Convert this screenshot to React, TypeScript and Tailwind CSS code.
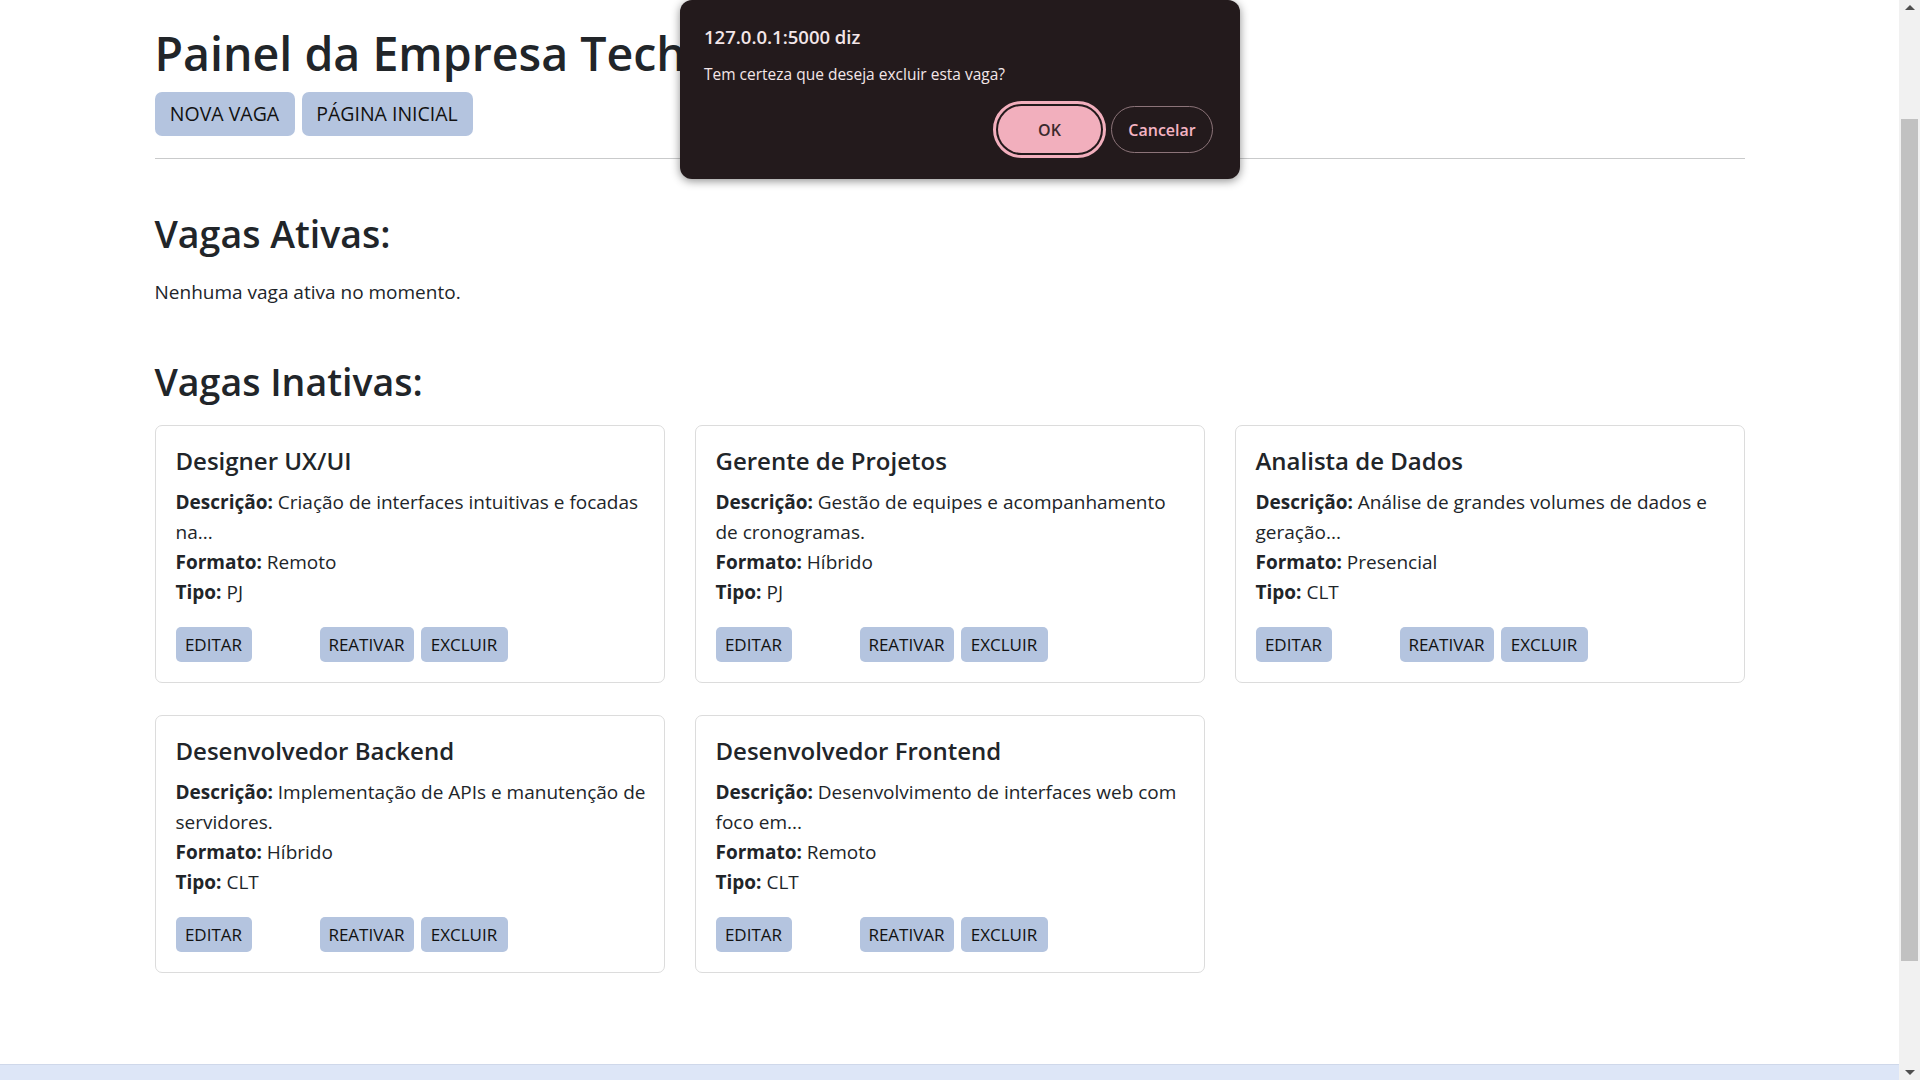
import type { ReactNode } from 'react'

type Vaga = {
  titulo: string
  descricao: [string, string]
  formato: string
  tipo: string
}

const vagas: Vaga[] = [
  {
    titulo: 'Designer UX/UI',
    descricao: ['Criação de interfaces intuitivas e focadas', 'na...'],
    formato: 'Remoto',
    tipo: 'PJ',
  },
  {
    titulo: 'Gerente de Projetos',
    descricao: ['Gestão de equipes e acompanhamento', 'de cronogramas.'],
    formato: 'Híbrido',
    tipo: 'PJ',
  },
  {
    titulo: 'Analista de Dados',
    descricao: ['Análise de grandes volumes de dados e', 'geração...'],
    formato: 'Presencial',
    tipo: 'CLT',
  },
  {
    titulo: 'Desenvolvedor Backend',
    descricao: ['Implementação de APIs e manutenção de', 'servidores.'],
    formato: 'Híbrido',
    tipo: 'CLT',
  },
  {
    titulo: 'Desenvolvedor Frontend',
    descricao: ['Desenvolvimento de interfaces web com', 'foco em...'],
    formato: 'Remoto',
    tipo: 'CLT',
  },
]

function SmallButton({ children, className }: { children: ReactNode; className: string }) {
  return (
    <button
      className={`flex h-[35px] items-center justify-center rounded-[5px] bg-[#b4c4df] text-[17px] text-[#111] ${className}`}
    >
      {children}
    </button>
  )
}

function VagaCard({ vaga }: { vaga: Vaga }) {
  return (
    <div className="h-[258px] rounded-[7px] border border-[#dcdcdc] bg-white px-5 pt-5">
      <h5 className="mb-[11px] text-[24px] font-semibold leading-[30px] whitespace-nowrap">{vaga.titulo}</h5>
      <div className="text-[19px] leading-[30px] whitespace-nowrap">
        <p>
          <strong className="font-bold">Descrição:</strong> {vaga.descricao[0]}
        </p>
        <p>{vaga.descricao[1]}</p>
        <p>
          <strong className="font-bold">Formato:</strong> {vaga.formato}
        </p>
        <p>
          <strong className="font-bold">Tipo:</strong> {vaga.tipo}
        </p>
      </div>
      <div className="mt-[20px] flex items-center">
        <SmallButton className="w-[76px]">EDITAR</SmallButton>
        <SmallButton className="ml-[68px] w-[94px]">REATIVAR</SmallButton>
        <SmallButton className="ml-[7px] w-[87px]">EXCLUIR</SmallButton>
      </div>
    </div>
  )
}

function ConfirmDialog() {
  return (
    <div className="absolute left-[680px] top-0 h-[179px] w-[560px] rounded-[12px] bg-[#231a1c] px-6 shadow-[0_2px_10px_rgba(0,0,0,0.45)]">
      <div className="pt-[25px] text-[18.5px] font-semibold leading-6 text-[#f3e6e8]">127.0.0.1:5000 diz</div>
      <div className="mt-[15px] text-[15.5px] leading-5 text-[#f3e6e8]">Tem certeza que deseja excluir esta vaga?</div>
      <div className="mt-[22px] flex justify-end gap-[10px] pr-[3px]">
        <button className="h-[47px] w-[103px] rounded-full bg-[#f2afbd] text-[16px] font-semibold text-[#3b2a2e] outline-[3px] outline-offset-2 outline-[#f2afbd]">
          OK
        </button>
        <button className="h-[47px] w-[102px] rounded-full border border-[#8c7479] text-[16px] font-semibold text-[#f5b4c3]">
          Cancelar
        </button>
      </div>
    </div>
  )
}

function Scrollbar() {
  return (
    <div className="flex h-full w-[21px] flex-col items-center bg-[#f1f1f1]">
      <div className="mt-[5px] h-0 w-0 border-x-[5px] border-b-[5px] border-x-transparent border-b-[#505050]" />
      <div className="mt-[109px] h-[842px] w-[17px] bg-[#c1c1c1]" />
      <div className="mt-auto mb-[5px] h-0 w-0 border-x-[5px] border-t-[5px] border-x-transparent border-t-[#505050]" />
    </div>
  )
}

export default function App() {
  return (
    <div
      className="relative flex h-[1080px] w-[1920px] overflow-hidden bg-white text-[#212529]"
      style={{ fontFamily: '"Open Sans", "Noto Sans", sans-serif' }}
    >
      <div className="flex flex-1 flex-col">
        <main className="flex-1 overflow-hidden">
          <div className="mx-auto w-[1590px] pt-[23px]">
            <h1 className="text-[46.5px] font-semibold leading-[60px] whitespace-nowrap">Painel da Empresa Tech</h1>
            <div className="mt-[9px] flex gap-[7px]">
              <button className="h-[44px] w-[140px] rounded-[7px] bg-[#b4c4df] text-[19.5px] text-[#111]">NOVA VAGA</button>
              <button className="h-[44px] w-[171px] rounded-[7px] bg-[#b4c4df] text-[19.5px] text-[#111]">PÁGINA INICIAL</button>
            </div>
            <hr className="mt-[22px] border-t border-[#c9cacb]" />

            <h2 className="mt-[51px] text-[37.5px] font-semibold leading-[48px]">Vagas Ativas:</h2>
            <p className="mt-[19px] text-[19px] leading-[30px]">Nenhuma vaga ativa no momento.</p>

            <h2 className="mt-[51px] text-[37.5px] font-semibold leading-[48px]">Vagas Inativas:</h2>
            <div className="mt-[19px] grid grid-cols-3 gap-x-[30px] gap-y-[32px]">
              {vagas.map((vaga) => (
                <VagaCard key={vaga.titulo} vaga={vaga} />
              ))}
            </div>
          </div>
        </main>
        <footer className="h-[16px] border-t border-[#cfd8ea] bg-[#dde6f7]" />
      </div>
      <Scrollbar />

      {/* thin browser strip behind the dialog */}
      <div className="absolute left-[809px] top-0 flex h-[2px] w-[301px]">
        <div className="w-[120px] bg-[#f4f4f4]" />
        <div className="w-[60px] bg-[#1a6fd1]" />
        <div className="flex-1 bg-[#f4f4f4]" />
      </div>
      <ConfirmDialog />
    </div>
  )
}
